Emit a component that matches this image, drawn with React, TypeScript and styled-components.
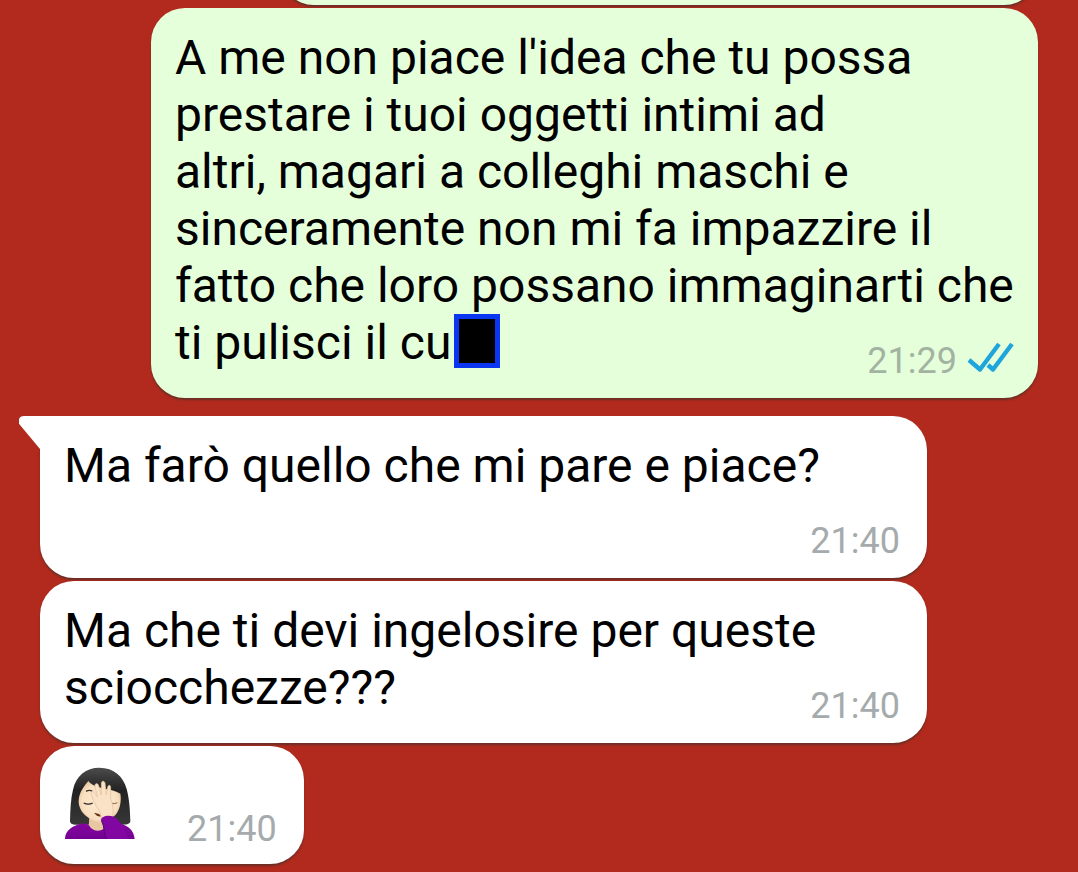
import React from "react";
import styled, { createGlobalStyle, css } from "styled-components";

const GlobalStyle = createGlobalStyle`
  * { box-sizing: border-box; }
  body {
    margin: 0;
    background: #b12a1d;
    font-family: Roboto, "Liberation Sans", sans-serif;
  }
`;

const Chat = styled.main`
  display: flex;
  flex-direction: column;
  gap: 3px;
  min-height: 100vh;
  padding: 0 40px 8px;
  overflow: hidden;
`;

type Side = "in" | "out";

const Bubble = styled.article<{ $side: Side; $tail?: boolean; $compact?: boolean }>`
  position: relative;
  display: grid;
  padding: 21px 24px 27px;
  border-radius: 34px;
  box-shadow: 0 2px 2px rgba(60, 50, 45, 0.6);
  ${({ $side }) =>
    $side === "out"
      ? css`
          margin-left: 111px;
          background: #e5ffdb;
        `
      : css`
          margin-right: 111px;
          background: #ffffff;
        `}
  ${({ $tail }) =>
    $tail &&
    css`
      margin-top: 15px;
      border-top-left-radius: 0;
    `}
  ${({ $compact }) =>
    $compact &&
    css`
      align-self: flex-start;
      margin-right: 0;
      padding-bottom: 25px;
      column-gap: 51px;
      grid-template-columns: auto auto;
    `}
`;

const PreviousBubble = styled.div`
  height: 5px;
  margin-left: 240px;
  display: flex;
  align-items: flex-end;

  &::before {
    content: "";
    flex: 1;
    height: 80px;
    border-radius: 34px;
    background: #e5ffdb;
    box-shadow: 0 2px 2px rgba(60, 50, 45, 0.6);
  }
`;

const Text = styled.p`
  grid-area: 1 / 1;
  margin: 0;
  min-height: 114px;
  font-size: 48px;
  line-height: 57px;
  color: #000000;
  white-space: nowrap;
`;

const Redacted = styled.span`
  display: inline-block;
  width: 46px;
  height: 54px;
  margin-left: 3px;
  vertical-align: -9px;
  border: 5px solid #0a36f2;
  background: #000000;
`;

const Meta = styled.footer<{ $side: Side; $column?: number }>`
  grid-area: 1 / ${({ $column }) => $column ?? 1};
  place-self: end;
  display: flex;
  align-items: flex-start;
  gap: 10px;
  margin-bottom: -11px;
  padding-right: ${({ $side }) => ($side === "in" ? "3px" : "0")};
  font-size: 36px;
  line-height: 42px;
  color: ${({ $side }) => ($side === "in" ? "#a5abac" : "#a3b3a2")};
`;

const Tail = styled.svg`
  position: absolute;
  top: 0;
  left: -21px;
  width: 22px;
  height: 34px;
`;

const Ticks = styled.svg`
  display: block;
  width: 47px;
  height: 36px;
`;

const Emoji = styled.svg`
  grid-area: 1 / 1;
  display: block;
  width: 72px;
  height: 72px;
`;

const ReadTicks = () => (
  <Ticks viewBox="0 0 47 36" role="img" aria-label="Letto">
    <g fill="none" stroke="#1ea6dc" strokeWidth="4.4" strokeLinejoin="round">
      <path d="M2 20 L13 29.5 L32 4" />
      <path d="M21 25 L26 29.5 L45 4" />
    </g>
  </Ticks>
);

const Facepalm = () => (
  <Emoji viewBox="72 50 216 216" role="img" aria-label="Donna che si copre il viso">
    <defs>
      <linearGradient id="hair" x1="0" y1="0" x2="0" y2="1">
        <stop offset="0" stopColor="#4c4c4c" />
        <stop offset="0.15" stopColor="#3c3c3c" />
        <stop offset="0.4" stopColor="#222222" />
        <stop offset="1" stopColor="#383838" />
      </linearGradient>
      <radialGradient id="skin" cx="0.5" cy="0.5" r="0.6">
        <stop offset="0" stopColor="#fdebd3" />
        <stop offset="0.7" stopColor="#f8dfc0" />
        <stop offset="1" stopColor="#e2bd96" />
      </radialGradient>
      <linearGradient id="sweater" x1="0" y1="0" x2="0" y2="1">
        <stop offset="0" stopColor="#86069f" />
        <stop offset="1" stopColor="#720092" />
      </linearGradient>
    </defs>
    <path
      d="M90 212 C91 180 92 146 99 118 C108 76 138 52 178 52 C222 52 250 78 260 116 C269 150 270 184 271 212 C271 220 262 223 250 223 H108 C96 223 90 220 90 212Z"
      fill="url(#hair)"
    />
    <path d="M148 198 H202 V232 C190 246 158 246 146 230Z" fill="#e8c8a2" />
    <path
      d="M116 150 C118 124 132 108 145 92 C156 106 176 112 198 116 C214 119 228 122 241 130 C245 152 240 178 226 194 C208 212 190 218 178 216 C150 212 114 186 116 150Z"
      fill="url(#skin)"
    />
    <path d="M138 123 Q147 118 157 122" fill="none" stroke="#3c2e26" strokeWidth="4" />
    <path d="M131 158 Q145 165 158 158" fill="none" stroke="#2d2521" strokeWidth="4" />
    <path d="M214 158 Q222 163 232 157" fill="none" stroke="#8a6246" strokeWidth="3" />
    <path d="M162 188 Q172 186 186 197 Q174 203 162 188Z" fill="#6b331b" />
    <path
      d="M75 266 C76 238 98 226 124 220 C140 218 146 222 152 232 C164 244 182 243 194 234 L228 218 C262 222 282 238 284 266Z"
      fill="url(#sweater)"
    />
    <path
      d="M184 212 C184 198 181 188 175 176 C166 166 158 146 154 130 C154 122 160 121 164 128 L172 140 L165 108 C164 98 173 97 176 106 L184 134 L184 98 C185 91 193 91 195 98 L199 134 L203 110 C206 102 212 104 212 112 L212 146 C218 160 221 174 218 204 L214 214Z"
      fill="#fae2c6"
      stroke="#e3c09b"
      strokeWidth="2"
    />
    <path
      d="M183 208 C188 192 222 194 231 206 C244 218 258 240 266 266 H200 C190 250 195 230 183 208Z"
      fill="#8206a2"
    />
    <path d="M184 210 C195 230 190 250 200 266" fill="none" stroke="#550070" strokeWidth="3" />
  </Emoji>
);

export default function App() {
  return (
    <>
      <GlobalStyle />
      <Chat>
        <PreviousBubble />
        <Bubble $side="out">
          <Text>
            A me non piace l'idea che tu possa
            <br />
            prestare i tuoi oggetti intimi ad
            <br />
            altri, magari a colleghi maschi e
            <br />
            sinceramente non mi fa impazzire il
            <br />
            fatto che loro possano immaginarti che
            <br />
            ti pulisci il cu
            <Redacted />
          </Text>
          <Meta $side="out">
            <time>21:29</time>
            <ReadTicks />
          </Meta>
        </Bubble>
        <Bubble $side="in" $tail>
          <Tail viewBox="0 0 22 34" aria-hidden="true">
            <path d="M22 0 H5 C0 0 -2 5 1 9 L21 33 H22Z" fill="#ffffff" />
          </Tail>
          <Text>Ma farò quello che mi pare e piace?</Text>
          <Meta $side="in">
            <time>21:40</time>
          </Meta>
        </Bubble>
        <Bubble $side="in">
          <Text>
            Ma che ti devi ingelosire per queste
            <br />
            sciocchezze???
          </Text>
          <Meta $side="in">
            <time>21:40</time>
          </Meta>
        </Bubble>
        <Bubble $side="in" $compact>
          <Facepalm />
          <Meta $side="in" $column={2}>
            <time>21:40</time>
          </Meta>
        </Bubble>
      </Chat>
    </>
  );
}
